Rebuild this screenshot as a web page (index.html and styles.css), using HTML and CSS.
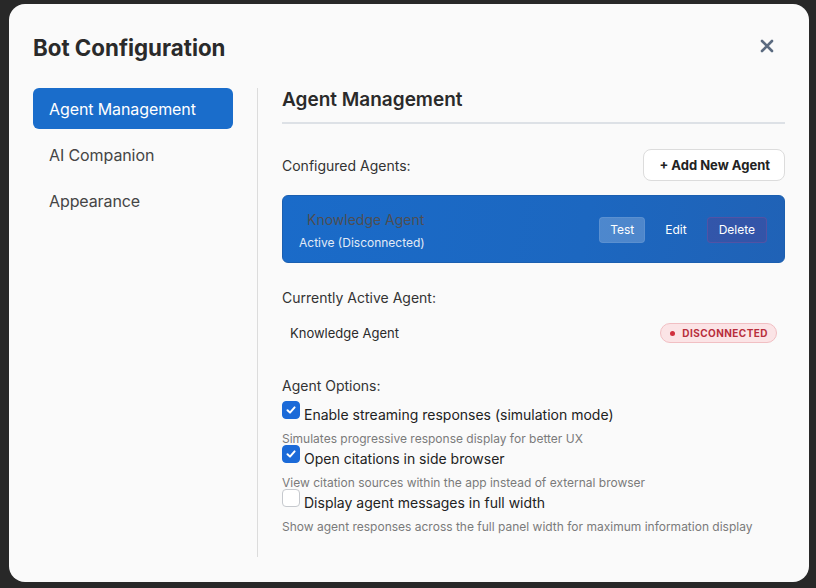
FILE: index.html
```html
<!DOCTYPE html>
<html>
<head>
<meta charset="utf-8">
<link rel="stylesheet" href="styles.css">
</head>
<body>
<div class="modal">
  <div class="modal-header">
    <h1 class="title">Bot Configuration</h1>
    <button class="close" aria-label="Close">
      <svg width="14" height="14" viewBox="0 0 14 14"><path d="M2 2 L12 12 M12 2 L2 12" stroke="#5b6b80" stroke-width="2.6" stroke-linecap="round"/></svg>
    </button>
  </div>
  <div class="modal-body">
    <nav class="sidebar">
      <div class="nav-item active">Agent Management</div>
      <div class="nav-item">AI Companion</div>
      <div class="nav-item">Appearance</div>
    </nav>
    <div class="divider"></div>
    <main class="content">
      <h2 class="section-title">Agent Management</h2>
      <div class="row-head">
        <span class="label">Configured Agents:</span>
        <button class="add-btn">+ Add New Agent</button>
      </div>
      <div class="agent-card">
        <div class="agent-info">
          <div class="agent-name">Knowledge Agent</div>
          <div class="agent-status">Active (Disconnected)</div>
        </div>
        <div class="agent-actions">
          <button class="act test">Test</button>
          <button class="act edit">Edit</button>
          <button class="act delete">Delete</button>
        </div>
      </div>
      <div class="label current-label">Currently Active Agent:</div>
      <div class="current-row">
        <span class="current-name">Knowledge Agent</span>
        <span class="badge"><span class="dot"></span>DISCONNECTED</span>
      </div>
      <div class="label options-label">Agent Options:</div>
      <div class="option">
        <label class="opt-row"><span class="cb checked"><svg width="12" height="12" viewBox="0 0 12 12"><path d="M2.5 6.2 L5 8.6 L9.6 3.4" fill="none" stroke="#fff" stroke-width="2" stroke-linecap="round" stroke-linejoin="round"/></svg></span>Enable streaming responses (simulation mode)</label>
        <div class="opt-desc">Simulates progressive response display for better UX</div>
      </div>
      <div class="option">
        <label class="opt-row"><span class="cb checked"><svg width="12" height="12" viewBox="0 0 12 12"><path d="M2.5 6.2 L5 8.6 L9.6 3.4" fill="none" stroke="#fff" stroke-width="2" stroke-linecap="round" stroke-linejoin="round"/></svg></span>Open citations in side browser</label>
        <div class="opt-desc">View citation sources within the app instead of external browser</div>
      </div>
      <div class="option">
        <label class="opt-row"><span class="cb"></span>Display agent messages in full width</label>
        <div class="opt-desc">Show agent responses across the full panel width for maximum information display</div>
      </div>
    </main>
  </div>
</div>
</body>
</html>
```
FILE: styles.css
```css
* { box-sizing: border-box; }
html, body { margin: 0; padding: 0; }
body {
  width: 816px;
  height: 588px;
  background: #282828;
  font-family: Inter, "Liberation Sans", Arial, sans-serif;
  color: #2b2b2b;
  padding: 4px 7px 6px 9px;
  overflow: hidden;
}
.modal {
  width: 800px;
  height: 578px;
  background: #fafafa;
  border-radius: 16px;
  padding: 30px 24px 24px 24px;
  display: flex;
  flex-direction: column;
}
.modal-header {
  display: flex;
  justify-content: space-between;
  align-items: center;
  height: 28px;
}
.title {
  margin: 0;
  font-size: 22.3px;
  font-weight: 700;
  line-height: 28px;
  color: #2a2a2a;
}
.close {
  border: none;
  background: none;
  padding: 0;
  margin-right: 11px;
  margin-bottom: 4px;
  width: 14px;
  height: 14px;
  display: flex;
}
.modal-body {
  display: flex;
  margin-top: 26px;
  flex: 1;
}
.sidebar {
  width: 200px;
  display: flex;
  flex-direction: column;
  gap: 5px;
}
.nav-item {
  height: 41px;
  line-height: 41px;
  padding-left: 16px;
  padding-top: 1px;
  font-size: 16px;
  color: #454545;
  border-radius: 6px;
  letter-spacing: -0.1px;
}
.nav-item.active {
  background: #1a6dcb;
  color: #fff;
}
.divider {
  width: 1px;
  background: #dcdcdc;
  margin-left: 24px;
  margin-bottom: 1px;
}
.content {
  flex: 1;
  padding-left: 24px;
}
.section-title {
  margin: 0;
  font-size: 19px;
  font-weight: 600;
  line-height: 24px;
  color: #2a2a2a;
  padding-bottom: 10px;
  border-bottom: 2px solid #dde1e6;
}
.label {
  font-size: 14px;
  color: #333;
  line-height: 17px;
}
.row-head {
  display: flex;
  justify-content: space-between;
  align-items: center;
  margin-top: 25px;
}
.add-btn {
  font-family: inherit;
  background: #fff;
  border: 1px solid #dcdcdc;
  border-radius: 8px;
  height: 32px;
  padding: 0 14px 0 15px;
  font-size: 13px;
  font-weight: 700;
  color: #222;
}
.agent-card {
  margin-top: 14px;
  height: 68px;
  border-radius: 6px;
  background: linear-gradient(100deg, #1a6bc9 0%, #1c67c0 60%, #2062b6 100%);
  border: 1px solid #1b5fb0;
  display: flex;
  align-items: center;
  justify-content: space-between;
  padding: 0 16px 0 16px;
}
.agent-info {
  display: flex;
  flex-direction: column;
  margin-top: 2px;
}
.agent-name {
  font-size: 14px;
  color: #4e4e52;
  line-height: 17px;
  padding-left: 8px;
}
.agent-status {
  font-size: 12px;
  color: #e2eaf6;
  line-height: 15px;
  margin-top: 7px;
}
.agent-actions {
  display: flex;
  align-items: center;
  gap: 9px;
  margin-top: 1px;
  margin-right: 1px;
}
.act {
  font-family: inherit;
  font-size: 12px;
  color: #fff;
  height: 26px;
  border-radius: 4px;
  border: 1px solid transparent;
  background: transparent;
  padding: 0 10px;
}
.act.test {
  background: rgba(255, 255, 255, 0.22);
  border-color: rgba(255, 255, 255, 0.08);
}
.act.delete {
  background: rgba(90, 60, 140, 0.35);
  border-color: rgba(140, 80, 160, 0.35);
  padding: 0 11px;
}
.current-label {
  margin-top: 26px;
}
.current-row {
  display: flex;
  justify-content: space-between;
  align-items: center;
  padding: 0 8px;
  margin-top: 17px;
}
.current-name {
  font-size: 13px;
  color: #2b2b2b;
}
.badge {
  display: inline-flex;
  align-items: center;
  gap: 7px;
  height: 20px;
  padding: 0 8px 0 9px;
  background: #fbe4e6;
  border: 1px solid #f1bfc3;
  border-radius: 10px;
  font-size: 10px;
  font-weight: 700;
  letter-spacing: 0.45px;
  color: #b82e3c;
}
.dot {
  width: 5px;
  height: 5px;
  border-radius: 50%;
  background: #d0303e;
}
.options-label {
  margin-top: 34px;
}
.option {
  margin-top: 7px;
}
.option + .option {
  margin-top: -1px;
}
.opt-row {
  display: flex;
  align-items: flex-end;
  gap: 4px;
  font-size: 14px;
  color: #222;
  line-height: 18px;
}
.cb {
  width: 18px;
  height: 18px;
  border-radius: 4px;
  border: 1.5px solid #c6c9ce;
  background: #fff;
  display: flex;
  align-items: center;
  justify-content: center;
  margin-bottom: 5px;
}
.cb.checked {
  background: #1b6ad8;
  border-color: #1b6ad8;
}
.opt-desc {
  font-size: 12px;
  color: #7a7a7a;
  line-height: 15px;
  margin-top: 7px;
}
```
